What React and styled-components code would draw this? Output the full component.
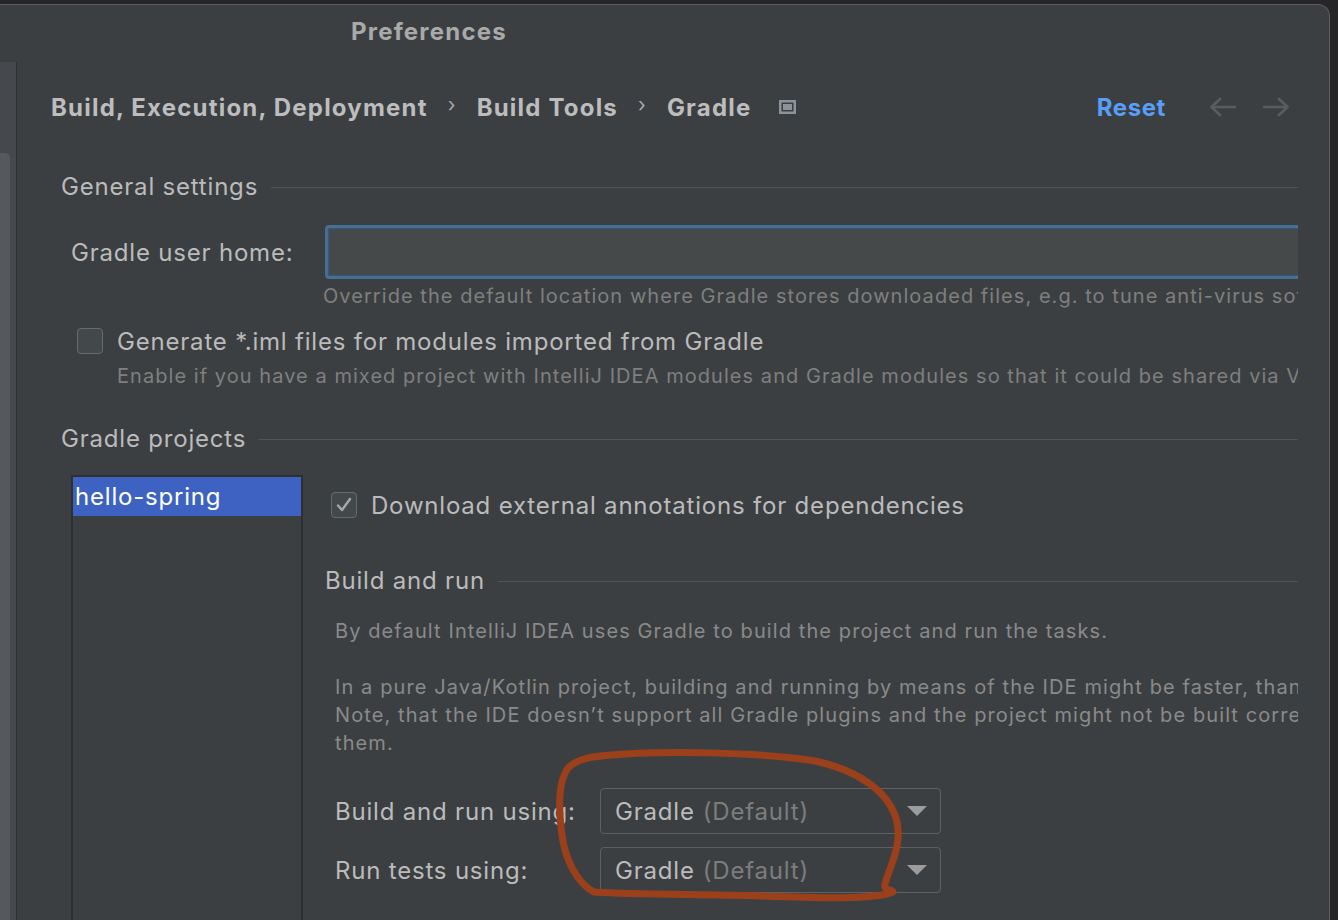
import React from "react";
import styled, { createGlobalStyle } from "styled-components";

const GlobalStyle = createGlobalStyle`
  html, body {
    margin: 0;
    padding: 0;
    background: #262628;
    overflow: hidden;
  }
  * { box-sizing: border-box; }
`;

const colors = {
  bg: "#3c3f41",
  text: "#bbbbbb",
  muted: "#7f7f7f",
  line: "#515355",
  blue: "#589df6",
  select: "#3d62c1",
};

const Screen = styled.div`
  position: relative;
  width: 1338px;
  height: 920px;
  padding-top: 4px;
  font-family: Inter, "Open Sans", "Liberation Sans", sans-serif;
  color: ${colors.text};
  letter-spacing: 0.8px;
  overflow: hidden;
`;

const Window = styled.div`
  width: 1330px;
  height: 930px;
  background: ${colors.bg};
  border-top: 1px solid #5c5d5f;
  border-right: 1px solid #5c5d5f;
  border-top-right-radius: 12px;
  display: flex;
  flex-direction: column;
`;

const TitleBar = styled.div`
  height: 57px;
  flex-shrink: 0;
  display: flex;
  align-items: center;
  padding: 0 0 5px 351px;
  font-size: 24px;
  font-weight: 700;
  letter-spacing: 1.2px;
  color: #a9a9a9;
`;

const Body = styled.div`
  flex: 1;
  display: flex;
  min-height: 0;
`;

const Sidebar = styled.div`
  width: 17px;
  flex-shrink: 0;
  background: #45484c;
  border-right: 1px solid #2f3134;
  padding-top: 91px;
`;

const SidebarPanel = styled.div`
  width: 10px;
  height: 100%;
  background: #55585c;
  border-top-right-radius: 5px;
`;

const Content = styled.div`
  width: 1281px;
  padding-left: 34px;
  overflow: hidden;
`;

const Header = styled.div`
  height: 90px;
  display: flex;
  align-items: center;
  font-size: 24px;
  font-weight: 700;
  letter-spacing: 1.2px;
`;

const Crumb = styled.span`
  color: #bdbdbd;
`;

const Chevron = styled.span`
  margin: 0 20px 4px;
  font-size: 20px;
  font-weight: 400;
  color: #a8a8a8;
`;

const HeaderIcon = styled.svg`
  margin-left: 28px;
`;

const Reset = styled.span`
  margin-left: auto;
  color: ${colors.blue};
  letter-spacing: 0.6px;
`;

const NavArrows = styled.div`
  display: flex;
  gap: 27px;
  margin-left: 43px;
  margin-right: 8px;
`;

const SectionTitle = styled.div`
  display: flex;
  align-items: center;
  height: 30px;
  margin-top: ${({ $top }) => $top}px;
  margin-left: ${({ $indent = 10 }) => $indent}px;
  font-size: 24px;
  line-height: 30px;
  white-space: nowrap;
  &:after {
    content: "";
    flex: 1;
    height: 1px;
    margin-left: 13px;
    background: ${colors.line};
  }
`;

const FieldRow = styled.div`
  display: flex;
  align-items: center;
  margin-top: 23px;
  margin-left: 20px;
  height: 54px;
`;

const FieldLabel = styled.div`
  width: ${({ $width }) => $width}px;
  flex-shrink: 0;
  font-size: 24px;
  white-space: nowrap;
`;

const TextInput = styled.div`
  flex: 1;
  height: 54px;
  margin-right: -20px;
  background: #45494a;
  border: 3px solid #466d94;
  border-radius: 4px;
  box-shadow: inset 0 0 0 1px #3a5878;
`;

const Helper = styled.div`
  margin-top: ${({ $top }) => $top}px;
  padding-left: ${({ $indent }) => $indent}px;
  font-size: 20px;
  line-height: 26px;
  color: ${colors.muted};
  white-space: nowrap;
  letter-spacing: 1.05px;
`;

const CheckRow = styled.label`
  display: flex;
  align-items: center;
  gap: 14px;
  height: 30px;
  margin-top: ${({ $top }) => $top}px;
  padding-left: ${({ $indent }) => $indent}px;
  font-size: 24px;
  white-space: nowrap;
`;

const Box = styled.span`
  width: 26px;
  height: 26px;
  flex-shrink: 0;
  border: 1.5px solid #676b6e;
  border-radius: 4px;
  background: #43484a;
  display: flex;
  align-items: center;
  justify-content: center;
`;

const Projects = styled.div`
  display: flex;
  margin-top: 21px;
`;

const ProjectList = styled.div`
  width: 232px;
  height: 470px;
  margin-left: 20px;
  border: 2px solid #2d2f31;
  flex-shrink: 0;
`;

const ProjectItem = styled.div`
  height: 39px;
  padding-left: 2px;
  display: flex;
  align-items: center;
  font-size: 24px;
  color: ${({ $selected }) => ($selected ? "#ffffff" : colors.text)};
  background: ${({ $selected }) => ($selected ? colors.select : "transparent")};
`;

const Pane = styled.div`
  flex: 1;
  margin-left: 22px;
  overflow: hidden;
`;

const Paragraph = styled.div`
  margin-top: 21px;
  padding-left: 10px;
  font-size: 20px;
  line-height: 28px;
  color: #8a8a8a;
  white-space: nowrap;
  letter-spacing: 1.1px;
`;

const FormRow = styled.div`
  display: flex;
  align-items: center;
  height: 46px;
  margin-top: ${({ $top }) => $top}px;
  padding-left: 10px;
`;

const Select = styled.div`
  width: 341px;
  height: 46px;
  border: 1.5px solid #5e6163;
  border-radius: 4px;
  display: flex;
  align-items: center;
  padding: 0 13px 0 14px;
  font-size: 24px;
  gap: 8px;
`;

const Hint = styled.span`
  color: #7d7d7d;
`;

const Caret = styled.svg`
  margin-left: auto;
`;

const Annotation = styled.svg`
  position: absolute;
  top: 0;
  left: 0;
  pointer-events: none;
`;

function Checkbox({ checked }) {
  return (
    <Box>
      {checked && (
        <svg width="18" height="18" viewBox="0 0 18 18">
          <path d="M3 9.5 L7 14 L15 3" fill="none" stroke="#a8a8a8" strokeWidth="2.4" strokeLinecap="round" strokeLinejoin="round" />
        </svg>
      )}
    </Box>
  );
}

function DropDown({ value, hint }) {
  return (
    <Select>
      <span>{value}</span>
      <Hint>{hint}</Hint>
      <Caret width="20" height="10" viewBox="0 0 20 10">
        <path d="M0 0 H20 L10 10 Z" fill="#9c9c9c" />
      </Caret>
    </Select>
  );
}

function Arrow({ dir }) {
  const d = dir === "left" ? "M26 10 H3 M11 2 L2.5 10 L11 18" : "M1 10 H24 M16 2 L24.5 10 L16 18";
  return (
    <svg width="27" height="20" viewBox="0 0 27 20">
      <path d={d} fill="none" stroke="#5a5c5f" strokeWidth="2.6" strokeLinecap="round" strokeLinejoin="round" />
    </svg>
  );
}

export default function App() {
  return (
    <Screen>
      <GlobalStyle />
      <Window>
        <TitleBar>Preferences</TitleBar>
        <Body>
          <Sidebar>
            <SidebarPanel />
          </Sidebar>
          <Content>
            <Header>
              <Crumb>Build, Execution, Deployment</Crumb>
              <Chevron>›</Chevron>
              <Crumb>Build Tools</Crumb>
              <Chevron>›</Chevron>
              <Crumb>Gradle</Crumb>
              <HeaderIcon width="17" height="14" viewBox="0 0 17 14">
                <rect x="0" y="0" width="17" height="14" fill="#8c9299" />
                <rect x="2.5" y="2.5" width="12" height="9" fill="#3c3f41" />
                <rect x="4" y="4" width="9" height="6" fill="#8c9299" />
              </HeaderIcon>
              <Reset>Reset</Reset>
              <NavArrows>
                <Arrow dir="left" />
                <Arrow dir="right" />
              </NavArrows>
            </Header>

            <SectionTitle $top={20}>General settings</SectionTitle>
            <FieldRow>
              <FieldLabel $width={254}>Gradle user home:</FieldLabel>
              <TextInput />
            </FieldRow>
            <Helper $top={4} $indent={272}>
              Override the default location where Gradle stores downloaded files, e.g. to tune anti-virus software on Windows
            </Helper>
            <CheckRow $top={17} $indent={26}>
              <Checkbox />
              Generate *.iml files for modules imported from Gradle
            </CheckRow>
            <Helper $top={7} $indent={66}>
              Enable if you have a mixed project with IntelliJ IDEA modules and Gradle modules so that it could be shared via VCS
            </Helper>

            <SectionTitle $top={35}>Gradle projects</SectionTitle>
            <Projects>
              <ProjectList>
                <ProjectItem $selected>hello-spring</ProjectItem>
              </ProjectList>
              <Pane>
                <CheckRow $top={15} $indent={6}>
                  <Checkbox checked />
                  Download external annotations for dependencies
                </CheckRow>
                <SectionTitle $top={46} $indent={0}>Build and run</SectionTitle>
                <Paragraph>
                  By default IntelliJ IDEA uses Gradle to build the project and run the tasks.
                  <br />
                  <br />
                  In a pure Java/Kotlin project, building and running by means of the IDE might be faster, thanks to optimizations.
                  <br />
                  Note, that the IDE doesn’t support all Gradle plugins and the project might not be built correctly with some of
                  <br />
                  them.
                </Paragraph>
                <FormRow $top={31}>
                  <FieldLabel $width={265}>Build and run using:</FieldLabel>
                  <DropDown value="Gradle" hint="(Default)" />
                </FormRow>
                <FormRow $top={13}>
                  <FieldLabel $width={265}>Run tests using:</FieldLabel>
                  <DropDown value="Gradle" hint="(Default)" />
                </FormRow>
              </Pane>
            </Projects>
          </Content>
        </Body>
      </Window>

      <Annotation width="1338" height="920" viewBox="0 0 1338 920">
        <path
          d="M600 756 C660 750 760 752 815 761 C858 770 890 792 897 822 C902 846 890 866 885 884 C883 891 893 889 893 892 C875 900 815 898 760 896 C700 894 640 895 594 892 C578 884 565 860 562 835 C558 806 558 782 568 768 C576 760 588 757 602 756"
          fill="none"
          stroke="#9c401b"
          strokeWidth="7"
          strokeLinecap="round"
          strokeLinejoin="round"
        />
      </Annotation>
    </Screen>
  );
}
